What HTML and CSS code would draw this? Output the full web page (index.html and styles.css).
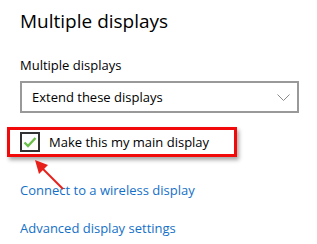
FILE: index.html
```html
<!DOCTYPE html>
<html>
<head>
<meta name="viewport" content="width=device-width, initial-scale=1">
<link rel="stylesheet" href="styles.css">
</head>
<body>

<div class="page">
  <h1 class="title">Multiple displays</h1>

  <div class="label">Multiple displays</div>

  <div class="select">
    <span>Extend these displays</span>
    <svg class="chevron" width="13" height="7" viewBox="0 0 13 7">
      <path d="M0.5 0.5 L6.5 6.5 L12.5 0.5" fill="none" stroke="#8a8a8a" stroke-width="1"/>
    </svg>
  </div>

  <div class="check-row">
    <div class="highlight">
      <span class="box">
        <svg width="14" height="12" viewBox="0 0 14 12">
          <path d="M1.5 6.5 L5 10 L12.5 2" fill="none" stroke="#6cc04a" stroke-width="2.4"/>
        </svg>
      </span>
      <span>Make this my main display</span>
    </div>
    <svg class="arrow" width="40" height="36" viewBox="0 0 40 36">
      <path d="M34 32 L12 10" stroke="#e8201c" stroke-width="2"/>
      <polygon points="6,3 19,8 10,17" fill="#e8201c"/>
    </svg>
  </div>

  <a class="link first" href="#">Connect to a wireless display</a>
  <a class="link" href="#">Advanced display settings</a>
</div>

</body>
</html>
```

FILE: styles.css
```css
body {
  margin: 0;
  background: #fff;
  font-family: "Open Sans", "Noto Sans", Arial, sans-serif;
  color: #000;
}

.page {
  padding: 7px 0 0 20px;
  position: relative;
}

.title {
  font-size: 19px;
  font-weight: normal;
  margin: 0;
  line-height: 28px;
}

.label {
  font-size: 13px;
  margin-top: 21px;
  line-height: 18px;
}

.select {
  height: 28px;
  margin-top: 7px;
  border: 2px solid #999;
  display: flex;
  align-items: center;
  justify-content: space-between;
  padding: 0 7px 0 10px;
  font-size: 13px;
  box-sizing: content-box;
  width: 258px;
}

/* highlighted checkbox with red frame */
.check-row {
  position: relative;
  margin-left: -13px;
  margin-top: 14px;
}

.highlight {
  display: inline-flex;
  align-items: center;
  width: 214px;
  height: 24px;
  border: 3px solid #f20a0a;
  box-shadow: 2px 3px 4px rgba(0,0,0,0.35);
  padding-left: 10px;
  font-size: 13px;
}

.box {
  width: 16px;
  height: 16px;
  border: 2px solid #333;
  display: flex;
  align-items: center;
  justify-content: center;
  margin-right: 9px;
}

.arrow {
  position: absolute;
  left: 22px;
  top: 30px;
}

.link {
  display: block;
  color: #1470c8;
  text-decoration: none;
  font-size: 13px;
  line-height: 18px;
}

.link.first {
  margin-top: 24px;
}

.link + .link {
  margin-top: 20px;
}
```
